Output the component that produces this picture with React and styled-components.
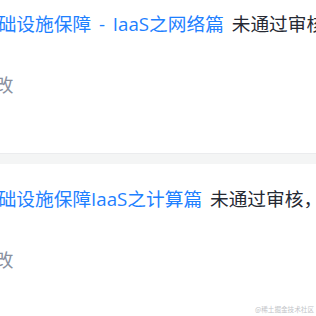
import React from 'react';
import styled, { createGlobalStyle } from 'styled-components';

const GlobalStyle = createGlobalStyle`
  html, body {
    margin: 0;
    padding: 0;
    background: #fff;
    overflow: hidden;
  }
  body {
    font-family: "Open Sans", "Noto Sans CJK SC", sans-serif;
  }
`;

const Page = styled.div`
  position: relative;
  width: 316px;
  height: 316px;
  overflow: hidden;
`;

const List = styled.ul`
  list-style: none;
  margin: -11px 0 0 -21px;
  padding: 0;
  width: 900px;
`;

const Item = styled.li`
  padding: 21px 0 56px;
  white-space: nowrap;
  font-size: 18.7px;
`;

const Divider = styled.li`
  height: 10px;
  border-top: 1px solid #ebecee;
  background: #f4f5f5;
`;

const Title = styled.div`
  line-height: 28px;
  word-spacing: 3px;
  color: #252933;
`;

const Link = styled.a`
  color: #1e80ff;
  text-decoration: none;
`;

const Action = styled.div`
  margin: 35px 0 0 -3px;
  line-height: 24px;
  color: #8a919f;
`;

const Watermark = styled.span`
  position: absolute;
  right: 2px;
  bottom: 3px;
  font-family: "Noto Sans CJK SC", sans-serif;
  font-size: 6.6px;
  line-height: 8px;
  color: #c2c4c8;
`;

const notices = [
  { id: 'net', article: '基础设施保障 - IaaS之网络篇' },
  { id: 'calc', article: '基础设施保障IaaS之计算篇' },
];

const App = () => {
  return (
    <Page>
      <GlobalStyle />
      <List>
        {notices.map((n, i) => (
          <React.Fragment key={n.id}>
            {i > 0 && <Divider />}
            <Item>
              <Title>
                <Link href="#">{n.article}</Link> 未通过审核，请修改后重新提交
              </Title>
              <Action>修改</Action>
            </Item>
          </React.Fragment>
        ))}
      </List>
      <Watermark>@稀土掘金技术社区</Watermark>
    </Page>
  );
};

export default App;
